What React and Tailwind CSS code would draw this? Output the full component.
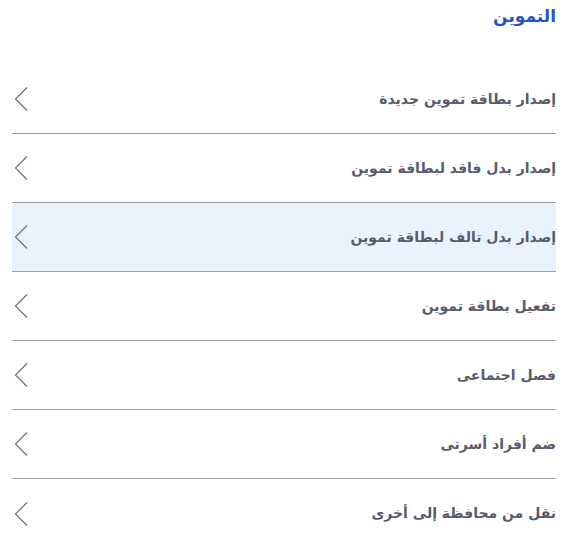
import React from "react";

const items = [
  "إصدار بطاقة تموين جديدة",
  "إصدار بدل فاقد لبطاقة تموين",
  "إصدار بدل تالف لبطاقة تموين",
  "تفعيل بطاقة تموين",
  "فصل اجتماعى",
  "ضم أفراد أسرتى",
  "نقل من محافظة إلى أخرى",
];

function Chevron() {
  return (
    <svg width="14" height="26" viewBox="0 0 14 26" fill="none">
      <path d="M13 1.5L1.5 13L13 24.5" stroke="#6b7280" strokeWidth="1.2" />
    </svg>
  );
}

export default function App() {
  return (
    <div dir="rtl" className="w-[568px] px-3 bg-white" style={{ fontFamily: '"DejaVu Sans", sans-serif' }}>
      <h1 className="pt-[3px] h-[65px] text-[17px] leading-[26px] font-bold text-[#1f57c9]">التموين</h1>
      <ul>
        {items.map((t, i) => (
          <li
            key={t}
            className={`flex items-center justify-between h-[69px] pl-[2px] ${i < items.length - 1 ? "border-b border-[#9ca0a8]" : ""} ${i === 2 ? "bg-[#e9f3fe]" : ""}`}
          >
            <span className="text-[14px] font-bold text-[#575b6b]">{t}</span>
            <Chevron />
          </li>
        ))}
      </ul>
    </div>
  );
}
